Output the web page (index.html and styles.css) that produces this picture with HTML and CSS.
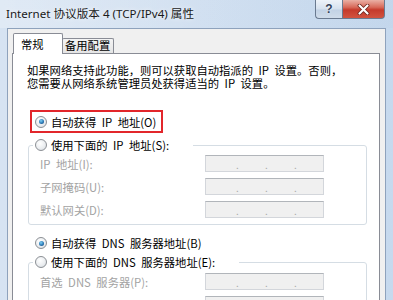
FILE: index.html
```html
<!DOCTYPE html>
<html lang="zh-CN">
<head>
<meta charset="utf-8">
<title>Internet 协议版本 4 (TCP/IPv4) 属性</title>
<link rel="stylesheet" href="styles.css">
</head>
<body>
<div class="window">
  <div class="titlebar">
    <div class="title">Internet 协议版本 4 (TCP/IPv4) 属性</div>
    <div class="caption-btns">
      <div class="cbtn help">?</div>
      <div class="cbtn close">
        <svg width="13" height="11" viewBox="0 0 13 11">
          <path d="M2.5 1.5 L10.5 9.5 M10.5 1.5 L2.5 9.5" stroke="#6b2219" stroke-width="3.8" stroke-linecap="round" fill="none"/>
          <path d="M2.5 1.5 L10.5 9.5 M10.5 1.5 L2.5 9.5" stroke="#ffffff" stroke-width="2.2" stroke-linecap="round" fill="none"/>
        </svg>
      </div>
    </div>
  </div>
  <div class="client">
    <div class="tabs">
      <div class="tab active">常规</div>
      <div class="tab">备用配置</div>
    </div>
    <div class="panel">
      <p class="intro">如果网络支持此功能，则可以获取自动指派的 IP 设置。否则，<br>您需要从网络系统管理员处获得适当的 IP 设置。</p>
      <div class="highlight">
        <div class="radio-row"><span class="radio checked"></span><span>自动获得 IP 地址(O)</span></div>
      </div>
      <fieldset class="group first">
        <legend><span class="radio"></span><span>使用下面的 IP 地址(S):</span></legend>
        <div class="field-row"><span class="flabel">IP 地址(I):</span><span class="ipbox"><span>.</span><span>.</span><span>.</span></span></div>
        <div class="field-row"><span class="flabel">子网掩码(U):</span><span class="ipbox"><span>.</span><span>.</span><span>.</span></span></div>
        <div class="field-row"><span class="flabel">默认网关(D):</span><span class="ipbox"><span>.</span><span>.</span><span>.</span></span></div>
      </fieldset>
      <div class="radio-row dns"><span class="radio checked"></span><span>自动获得 DNS 服务器地址(B)</span></div>
      <fieldset class="group second">
        <legend><span class="radio"></span><span>使用下面的 DNS 服务器地址(E):</span></legend>
        <div class="field-row"><span class="flabel">首选 DNS 服务器(P):</span><span class="ipbox"><span>.</span><span>.</span><span>.</span></span></div>
        <div class="field-row"><span class="flabel">备用 DNS 服务器(A):</span><span class="ipbox"><span>.</span><span>.</span><span>.</span></span></div>
      </fieldset>
    </div>
  </div>
</div>
</body>
</html>
```
FILE: styles.css
```css
html, body {
  margin: 0;
  padding: 0;
}
body {
  width: 393px;
  height: 300px;
  overflow: hidden;
  font-family: "Noto Sans CJK SC", "Noto Sans", sans-serif;
  font-size: 11.3px;
  color: #000;
}
.window {
  height: 300px;
  display: flex;
  flex-direction: column;
  background: linear-gradient(to right, #d6e3f2 0%, #d3e1f1 45%, #c6d9ee 100%);
  box-sizing: border-box;
}
.titlebar {
  height: 28px;
  flex: none;
  display: flex;
  justify-content: space-between;
  align-items: flex-start;
  background: linear-gradient(to right, rgba(255,255,255,0.25), rgba(255,255,255,0) 50%, rgba(180,200,225,0.15));
}
.title {
  padding: 6px 0 0 6px;
  line-height: 16px;
  font-size: 11.6px;
  font-family: "Noto Sans", "Noto Sans CJK SC", sans-serif;
  color: #1a1a1a;
  text-shadow: 0 0 5px rgba(255,255,255,0.9);
  white-space: nowrap;
}
.caption-btns {
  display: flex;
  margin-right: 8px;
}
.cbtn {
  height: 19px;
  box-sizing: border-box;
  border: 1px solid #6a7a90;
  border-top: none;
  display: flex;
  align-items: center;
  justify-content: center;
}
.help {
  width: 27px;
  border-right: none;
  border-radius: 0 0 0 4px;
  background: linear-gradient(#eef3f9, #d6e1ee 50%, #c2d2e5 55%, #d0dcea);
  color: #34425a;
  font: bold 12px "Liberation Sans", sans-serif;
  text-shadow: 0 0 2px #fff;
}
.close {
  width: 43px;
  border-radius: 0 0 4px 0;
  background: linear-gradient(#eab0a5, #d86a5a 40%, #c53a2b 55%, #d2533f 100%);
}
.client {
  flex: 1;
  margin: 0 7px;
  background: #f0f0f0;
  border: 1px solid #8ea2bc;
  border-bottom: none;
  padding: 4px 5px 0 4px;
  display: flex;
  flex-direction: column;
  min-height: 0;
}
.tabs {
  display: flex;
  align-items: flex-end;
  height: 20px;
  padding-left: 1px;
  position: relative;
  z-index: 1;
}
.tab {
  box-sizing: border-box;
  height: 15px;
  width: 52px;
  margin-left: -1px;
  border: 1px solid #898c95;
  border-bottom: none;
  border-radius: 2px 2px 0 0;
  background: linear-gradient(#f4f4f4, #e4e4e4);
  padding: 0 0 0 2px;
  line-height: 13px;
  white-space: nowrap;
}
.tab.active {
  width: 50px;
  height: 21px;
  margin-left: 0;
  margin-bottom: -1px;
  background: #fff;
  padding: 2px 0 0 7px;
  line-height: 16px;
  position: relative;
  z-index: 2;
}
.panel {
  flex: 1;
  background: #fff;
  border: 1px solid #898c95;
  border-bottom: none;
  min-height: 0;
  overflow: hidden;
  word-spacing: 3px;
}
.intro {
  margin: 10px 0 0 14px;
  line-height: 13px;
  white-space: nowrap;
}
.highlight {
  margin: 20px 0 0 17px;
  width: 133px;
  height: 23px;
  box-sizing: border-box;
  border: 2px solid #e2262b;
  padding-left: 3px;
  display: flex;
  align-items: center;
}
.radio-row {
  display: flex;
  align-items: center;
  gap: 4px;
  height: 14px;
  line-height: 14px;
  white-space: nowrap;
}
.radio-row.dns {
  margin: 11px 0 0 22px;
}
.radio {
  flex: none;
  width: 12px;
  height: 12px;
  box-sizing: border-box;
  border-radius: 50%;
  border: 1px solid #8b8f94;
  background: radial-gradient(circle at 40% 35%, #ffffff 0%, #e9ecef 60%, #cfd4d9 100%);
  position: relative;
}
.radio.checked::after {
  content: "";
  position: absolute;
  left: 2.5px;
  top: 2.5px;
  width: 5px;
  height: 5px;
  border-radius: 50%;
  background: radial-gradient(circle at 40% 35%, #7fd0f5 0%, #2a78b5 55%, #123f6e 100%);
}
.group {
  margin: 5px 12px 0 15px;
  padding: 3px 0 6px 4px;
  border: 1px solid #d5dde4;
  border-radius: 3px;
  min-width: 0;
}
.group.second {
  margin-top: 5px;
  padding-top: 4px;
}
.group legend {
  display: flex;
  align-items: center;
  gap: 4px;
  padding: 0 24px 0 2px;
  height: 14px;
  line-height: 14px;
  white-space: nowrap;
}
.field-row {
  display: flex;
  align-items: center;
  height: 17px;
  padding-left: 7px;
  margin-top: 6px;
}
.field-row:first-of-type {
  margin-top: 0;
}
.flabel {
  width: 165px;
  flex: none;
  color: #a3a3a3;
  white-space: nowrap;
}
.ipbox {
  width: 119px;
  height: 17px;
  box-sizing: border-box;
  border: 1px solid #d3d6db;
  border-top-color: #b1b5ba;
  background: #f0f0f0;
  display: flex;
  padding-left: 30px;
  color: #a8a8a8;
  font-size: 10px;
  line-height: 17px;
  word-spacing: 0;
}
.ipbox span {
  width: 30px;
}
```
